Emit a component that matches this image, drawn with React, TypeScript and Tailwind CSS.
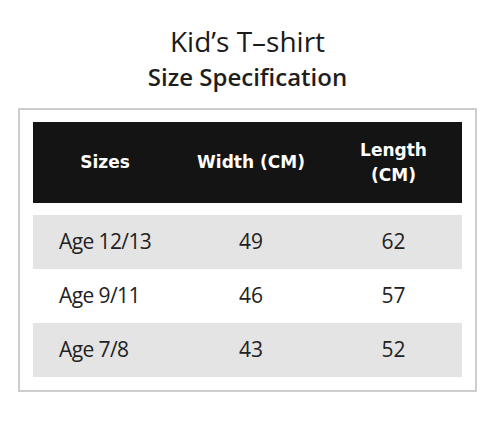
import React from "react";

const rows = [
  { size: "Age 12/13", w: "49", l: "62", gray: true },
  { size: "Age 9/11", w: "46", l: "57", gray: false },
  { size: "Age 7/8", w: "43", l: "52", gray: true },
];

export default function App() {
  return (
    <div className="w-[500px] h-[422px] bg-white overflow-hidden">
      <div className="ml-[18px] w-[459px] pt-[24px]">
        <div className="text-center text-[28px] leading-[34px] text-[#1a1a1a] font-['Open_Sans',sans-serif] font-normal">
          Kid’s T–shirt
        </div>
        <div className="mt-[4px] text-center text-[24px] leading-[30px] text-[#1e1e1e] font-['Open_Sans',sans-serif] font-semibold">
          Size Specification
        </div>
        <div className="mt-[16px] border-2 border-[#cdcdcd] px-[13px] pt-[12px] pb-[13px]">
          <div className="h-[81px] bg-[#141414] grid grid-cols-[144px_148px_137px] items-center text-white font-['DejaVu_Sans',sans-serif] font-bold text-[17px] leading-[25px]">
            <div className="text-center">Sizes</div>
            <div className="text-center">Width (CM)</div>
            <div className="text-center">
              Length
              <br />
              (CM)
            </div>
          </div>
          <div className="mt-[12px] flex flex-col">
            {rows.map((r) => (
              <div
                key={r.size}
                className={`h-[54px] grid grid-cols-[144px_148px_137px] items-center text-[21px] text-[#222] font-['Open_Sans',sans-serif] ${
                  r.gray ? "bg-[#e4e4e4]" : "bg-white"
                }`}
              >
                <div className="pl-[26px] tracking-[-0.6px]">{r.size}</div>
                <div className="text-center">{r.w}</div>
                <div className="text-center">{r.l}</div>
              </div>
            ))}
          </div>
        </div>
      </div>
    </div>
  );
}
